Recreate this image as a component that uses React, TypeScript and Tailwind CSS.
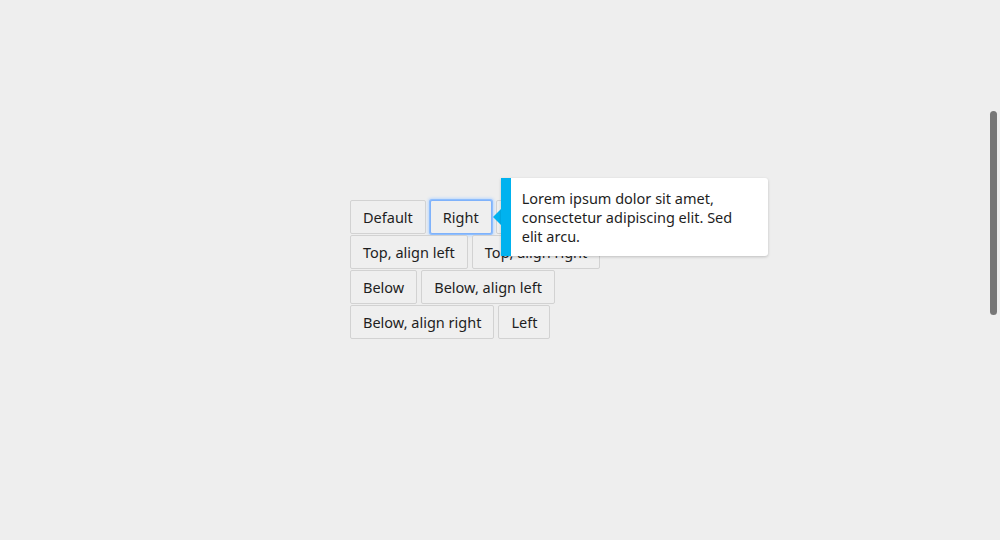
import React from 'react';

const buttons = [
  'Default',
  'Right',
  'Top',
  'Top, align left',
  'Top, align right',
  'Below',
  'Below, align left',
  'Below, align right',
  'Left',
];

const Tooltip: React.FC = () => (
  <div className="absolute left-[calc(100%+1px)] top-1/2 -translate-y-1/2 z-10 flex items-center">
    {/* flecha */}
    <div className="w-0 h-0 border-y-[8px] border-y-transparent border-r-[8px] border-r-[#00b2ef]" />
    <div className="w-[267px] bg-white border-l-[10px] border-[#00b2ef] rounded-r-[3px] shadow-[0_1px_3px_rgba(0,0,0,0.2)] pl-[11px] pr-[20px] pt-[11px] pb-[10px] text-left text-[14.5px] leading-[19px] text-[#1e1e1e]">
      Lorem ipsum dolor sit amet, consectetur adipiscing elit. Sed elit arcu.
    </div>
  </div>
);

const App: React.FC = () => {
  return (
    <div className="relative w-full h-[540px] overflow-hidden bg-[#eeeeee] font-['Noto_Sans',sans-serif]">
      <div className="flex justify-center pt-[200px]">
        <div className="w-[300px] flex flex-wrap gap-x-1 gap-y-px">
          {buttons.map((label) => (
            <div key={label} className="relative">
              <button
                className={
                  label === 'Right'
                    ? 'h-[34px] px-3 pt-[2px] rounded-[2px] border border-[#7fb2fb] bg-[#efefef] text-[14.5px] text-[#1e1e1e] shadow-[0_0_0_1px_#8fbefd,0_0_3px_2px_#bcd8fd]'
                    : 'h-[34px] px-3 pt-[2px] rounded-[2px] border border-[#d2d2d2] bg-[#efefef] text-[14.5px] text-[#1e1e1e]'
                }
              >
                {label}
              </button>
              {label === 'Right' && <Tooltip />}
            </div>
          ))}
        </div>
      </div>
      {/* barra de rolagem */}
      <div className="absolute right-[3px] top-[111px] w-[7px] h-[204px] rounded-full bg-[#777777]" />
    </div>
  );
};

export default App;
